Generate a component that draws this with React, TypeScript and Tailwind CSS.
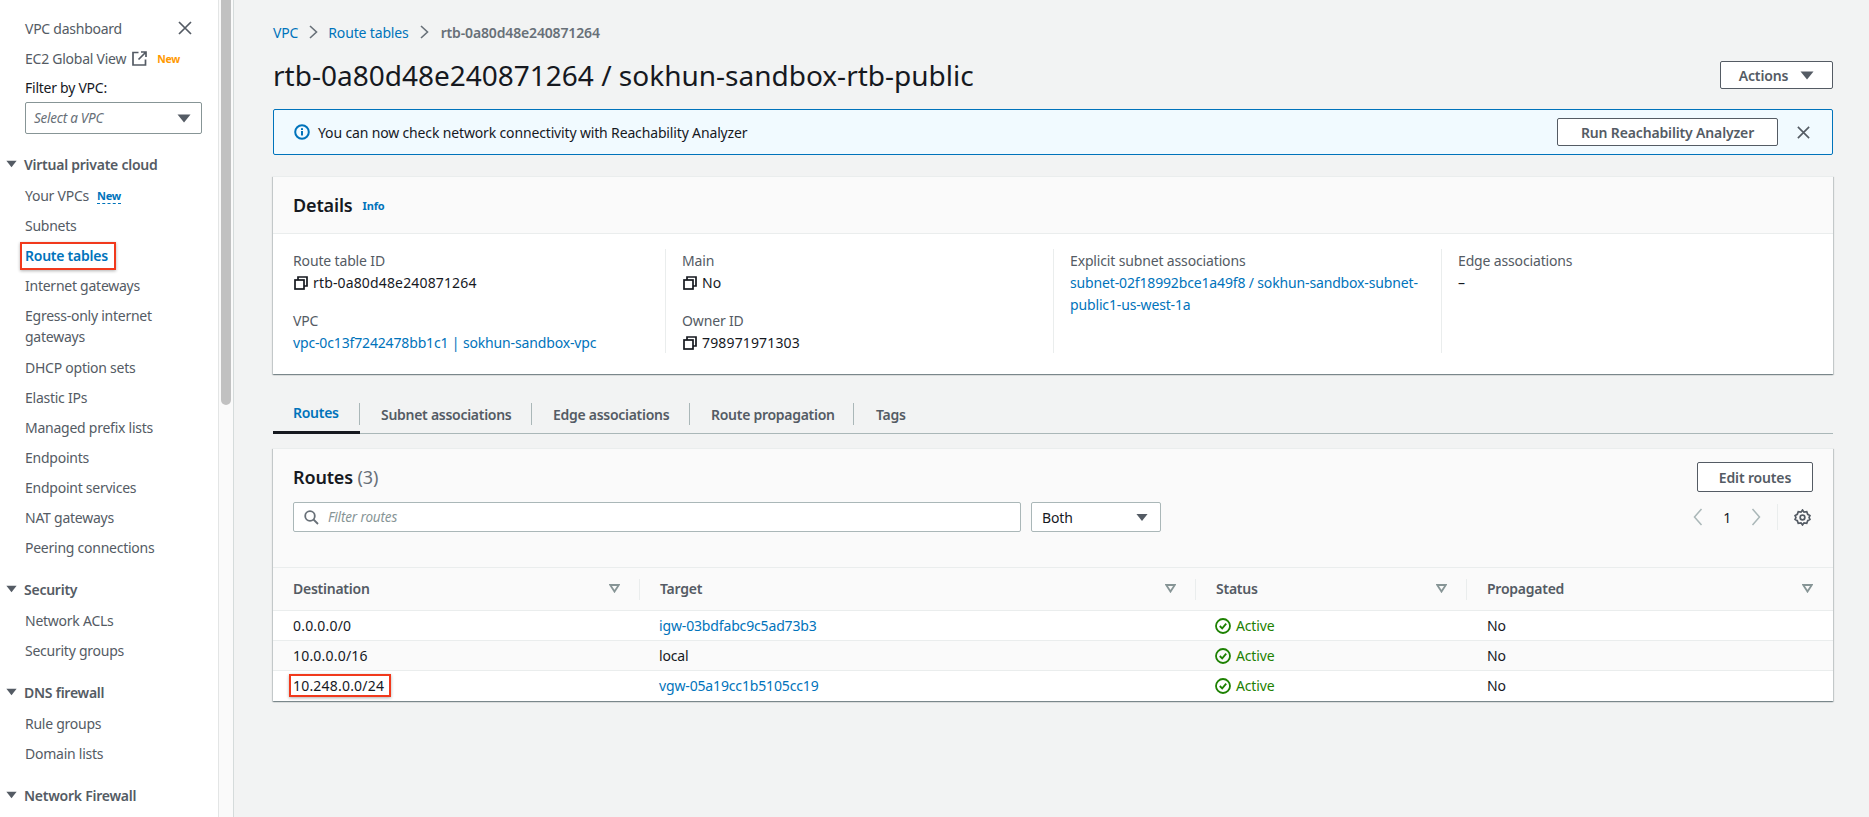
import React from "react";

const Caret = ({ c = "w-[14px] h-[9px]", fill = "#545b64" }: { c?: string; fill?: string }) => (
  <svg viewBox="0 0 14 9" className={c}><path d="M0.5 0.5H13.5L7 8.5Z" fill={fill} /></svg>
);
const Close = ({ s = 16 }: { s?: number }) => (
  <svg width={s} height={s} viewBox="0 0 16 16" fill="none" stroke="#545b64" strokeWidth="1.7"><path d="M2 2L14 14M14 2L2 14" /></svg>
);
const Copy = () => (
  <svg width="14" height="14" viewBox="0 0 14 14" fill="none" stroke="#16191f" strokeWidth="1.7" className="shrink-0 ml-px">
    <rect x="1" y="4" width="9" height="9" />
    <path d="M4 4V1H13V10H10" />
  </svg>
);
const External = () => (
  <svg width="15" height="15" viewBox="0 0 15 15" fill="none" stroke="#545b64" strokeWidth="1.7">
    <path d="M6.5 1.5H1V14H13.5V8.5" />
    <path d="M9 1H14V6M14 1L6.5 8.5" />
  </svg>
);
const Info = () => (
  <svg width="16" height="16" viewBox="0 0 16 16" fill="none" className="shrink-0">
    <circle cx="8" cy="8" r="6.8" stroke="#0073bb" strokeWidth="2" />
    <rect x="7" y="7" width="2" height="4.5" fill="#0073bb" />
    <rect x="7" y="4.2" width="2" height="1.8" fill="#0073bb" />
  </svg>
);
const Check = () => (
  <svg width="16" height="16" viewBox="0 0 16 16" fill="none" stroke="#1d8102" strokeWidth="1.8" className="shrink-0">
    <circle cx="8" cy="8" r="7" />
    <path d="M4.8 8L7.2 10.4L11.2 5.6" />
  </svg>
);
const SortIcon = () => (
  <svg width="11" height="9" viewBox="0 0 11 9" fill="none" stroke="#879596" strokeWidth="1.8" className="shrink-0">
    <path d="M1.2 1H9.8L5.5 7.6Z" />
  </svg>
);
const Gear = () => (
  <svg width="17" height="17" viewBox="0 0 16 16" fill="none" stroke="#545b64" strokeWidth="1.6">
    <path d="M8 1L9.4 3L12 2.6L12.9 5L15 6.2L14.2 8L15 9.8L12.9 11L12 13.4L9.4 13L8 15L6.6 13L4 13.4L3.1 11L1 9.8L1.8 8L1 6.2L3.1 5L4 2.6L6.6 3Z" />
    <circle cx="8" cy="8" r="2.2" />
  </svg>
);
const Chevron = ({ left }: { left?: boolean }) => (
  <svg width="10" height="18" viewBox="0 0 10 18" fill="none" stroke="#aab7b8" strokeWidth="1.5">
    <path d={left ? "M8.5 1L1.5 9L8.5 17" : "M1.5 1L8.5 9L1.5 17"} />
  </svg>
);
const Crumb = () => (
  <svg width="10" height="14" viewBox="0 0 10 14" fill="none" stroke="#687078" strokeWidth="1.6" className="shrink-0">
    <path d="M2 1L8.5 7L2 13" />
  </svg>
);

const Item = ({ children, h = "h-[30px]" }: { children: React.ReactNode; h?: string }) => (
  <div className={`${h} flex items-center pl-[25px] text-[#545b64] whitespace-nowrap`}>{children}</div>
);
const Section = ({ children, mt = "mt-[12px]" }: { children: string; mt?: string }) => (
  <div className={`${mt} mb-px h-[30px] flex items-center pl-[6px] gap-[7px] font-semibold text-[#545b64] whitespace-nowrap`}>
    <Caret c="w-[11px] h-[8px]" />
    {children}
  </div>
);

const Sidebar = () => (
  <aside className="w-[234px] shrink-0 flex h-full overflow-hidden bg-white tracking-[-0.25px]">
    <div className="w-[219px] shrink-0 border-r border-[#e3e5e5] pt-[13px] overflow-hidden">
      <div className="h-[30px] flex items-center justify-between pl-[25px] pr-[25px] text-[#545b64]">
        VPC dashboard
        <Close />
      </div>
      <div className="h-[30px] flex items-center pl-[25px] text-[#545b64] gap-[6px]">
        EC2 Global View
        <External />
        <span className="text-[#ff9900] text-[10.5px] font-bold ml-[4px] mt-[3px]">New</span>
      </div>
      <div className="h-[29px] flex items-center pl-[25px] text-[#16191f]">Filter by VPC:</div>
      <div className="ml-[25px] w-[177px] h-[32px] border border-[#879596] rounded-[2px] flex items-center justify-between pl-[8px] pr-[10px] italic text-[#687078] text-[13.5px]">
        Select a VPC
        <Caret />
      </div>
      <Section mt="mt-[15px]">Virtual private cloud</Section>
      <Item>
        Your VPCs
        <span className="ml-[8px] mt-[2px] text-[#0073bb] text-[11px] font-bold border-b border-dashed border-[#0073bb] leading-[14px]">New</span>
      </Item>
      <Item>Subnets</Item>
      <Item>
        <span className="relative font-semibold text-[#0073bb]">
          Route tables
          <span className="absolute -left-[5px] -right-[8px] -top-[3px] -bottom-[4px] border-2 border-[#f1391c] shadow-[0_1px_3px_rgba(0,0,0,0.3)]" />
        </span>
      </Item>
      <Item>Internet gateways</Item>
      <div className="pl-[25px] pr-[8px] pt-[5px] leading-[21px] text-[#545b64] h-[52px]">Egress-only internet gateways</div>
      <Item>DHCP option sets</Item>
      <Item>Elastic IPs</Item>
      <Item>Managed prefix lists</Item>
      <Item>Endpoints</Item>
      <Item>Endpoint services</Item>
      <Item>NAT gateways</Item>
      <Item>Peering connections</Item>
      <Section>Security</Section>
      <Item>Network ACLs</Item>
      <Item>Security groups</Item>
      <Section>DNS firewall</Section>
      <Item>Rule groups</Item>
      <Item>Domain lists</Item>
      <Section>Network Firewall</Section>
    </div>
    <div className="w-[15px] shrink-0 flex justify-center pt-0 border-r border-[#d5dbdb] bg-[#fafafa]">
      <div className="w-[10px] h-[405px] rounded-b-[5px] bg-[#c1c1c1]" />
    </div>
  </aside>
);

const Btn = ({ children, c }: { children: React.ReactNode; c: string }) => (
  <div className={`${c} bg-white border border-[#545b64] rounded-[2px] flex items-center justify-center font-semibold text-[#545b64] whitespace-nowrap`}>
    {children}
  </div>
);

const Field = ({ label, children, mt }: { label: string; children: React.ReactNode; mt?: string }) => (
  <div className={mt}>
    <div className="h-[22px] flex items-center text-[#545b64]">{label}</div>
    <div className="mt-px leading-[22px] text-[#16191f]">{children}</div>
  </div>
);
const CopyVal = ({ children }: { children: string }) => (
  <div className="flex items-center gap-[5px] tracking-[0.15px]">
    <Copy />
    {children}
  </div>
);

const Details = () => (
  <section className="mt-[21px] bg-white border-t border-[#eaeded] shadow-[0_1px_1px_0_rgba(0,28,36,0.3),1px_1px_1px_0_rgba(0,28,36,0.15),-1px_1px_1px_0_rgba(0,28,36,0.15)] h-[198px]">
    <div className="h-[57px] bg-[#fafafa] border-b border-[#eaeded] flex items-center pl-[20px]">
      <h2 className="text-[18px] font-semibold text-[#16191f]">Details</h2>
      <span className="ml-[10px] mt-[3px] text-[11px] font-bold text-[#0073bb]">Info</span>
    </div>
    <div className="grid grid-cols-[392px_388px_388px_1fr] pt-[15px]">
      <div className="pl-[20px] h-[104px]">
        <Field label="Route table ID"><CopyVal>rtb-0a80d48e240871264</CopyVal></Field>
        <Field label="VPC" mt="mt-[15px]">
          <span className="text-[#0073bb] whitespace-nowrap">vpc-0c13f7242478bb1c1 | sokhun-sandbox-vpc</span>
        </Field>
      </div>
      <div className="pl-[16px] h-[104px] border-l border-[#eaeded]">
        <Field label="Main"><CopyVal>No</CopyVal></Field>
        <Field label="Owner ID" mt="mt-[15px]"><CopyVal>798971971303</CopyVal></Field>
      </div>
      <div className="pl-[16px] pr-[14px] h-[104px] border-l border-[#eaeded]">
        <Field label="Explicit subnet associations">
          <span className="text-[#0073bb]">subnet-02f18992bce1a49f8 / sokhun-sandbox-subnet-public1-us-west-1a</span>
        </Field>
      </div>
      <div className="pl-[16px] h-[104px] border-l border-[#eaeded]">
        <Field label="Edge associations">–</Field>
      </div>
    </div>
  </section>
);

const tabs = [
  ["Routes", "w-[87px] pl-[20px] border-b-[3px] border-[#16191f] text-[#0073bb]"],
  ["Subnet associations", "w-[172px] pl-[21px] text-[#545b64]"],
  ["Edge associations", "w-[158px] pl-[21px] text-[#545b64]"],
  ["Route propagation", "w-[164px] pl-[21px] text-[#545b64]"],
  ["Tags", "w-[80px] pl-[22px] text-[#545b64]"],
];

const Tabs = () => (
  <div className="mt-[22px] h-[38px] flex border-b border-[#aab7b8]">
    {tabs.map(([t, c], i) => (
      <div key={t} className={`${c} h-[38px] pb-[2px] flex items-center font-semibold tracking-[-0.28px] whitespace-nowrap relative`}>
        {t}
        {i < 4 && <span className="absolute right-0 top-[7px] h-[22px] w-px bg-[#aab7b8]" />}
      </div>
    ))}
  </div>
);

const cols = "grid grid-cols-[367px_556px_271px_1fr]";
const Head = ({ label, last }: { label: string; last?: boolean }) => (
  <div className="h-full pb-px flex items-center justify-between pl-[20px] pr-[20px] font-semibold tracking-[-0.25px] text-[#545b64] relative">
    {label}
    <SortIcon />
    {!last && <span className="absolute right-0 top-[11px] h-[21px] w-px bg-[#eaeded]" />}
  </div>
);
const Status = () => (
  <div className="pl-[19px] flex items-center gap-[5px] text-[#1d8102]"><Check />Active</div>
);
const Row = ({ dest, target, link, bg, last }: { dest: React.ReactNode; target: string; link?: boolean; bg: string; last?: boolean }) => (
  <div className={`${cols} ${bg} items-center h-[30px] ${last ? "pb-px" : "border-b border-[#eaeded]"} text-[#16191f]`}>
    <div className="pl-[20px] tracking-[0.2px]">{dest}</div>
    <div className={`pl-[19px] ${link ? "text-[#0073bb]" : ""}`}>{target}</div>
    <Status />
    <div className="pl-[20px]">No</div>
  </div>
);

const Routes = () => (
  <section className="mt-[14px] bg-[#fafafa] border-t border-[#eaeded] shadow-[0_1px_1px_0_rgba(0,28,36,0.3),1px_1px_1px_0_rgba(0,28,36,0.15),-1px_1px_1px_0_rgba(0,28,36,0.15)] h-[253px]">
    <div className="h-[119px] pl-[20px] pr-[20px] pt-[13px] border-b border-[#eaeded] relative">
      <div className="flex items-center justify-between h-[30px]">
        <h2 className="text-[18px] font-semibold text-[#16191f]">
          Routes <span className="font-normal text-[#687078]">(3)</span>
        </h2>
        <Btn c="w-[116px] h-[30px]">Edit routes</Btn>
      </div>
      <div className="mt-[10px] flex items-center">
        <div className="w-[728px] h-[30px] bg-white border border-[#aab7b8] rounded-[2px] flex items-center pl-[10px] gap-[9px]">
          <svg width="15" height="15" viewBox="0 0 15 15" fill="none" stroke="#687078" strokeWidth="1.8">
            <circle cx="6" cy="6" r="4.8" /><path d="M9.5 9.5L14 14" />
          </svg>
          <span className="italic text-[#879596] text-[13.5px]">Filter routes</span>
        </div>
        <div className="ml-[10px] w-[130px] h-[30px] bg-white border border-[#aab7b8] rounded-[2px] flex items-center justify-between pl-[10px] pr-[12px] text-[#16191f]">
          Both
          <Caret c="w-[12px] h-[9px]" />
        </div>
        <div className="ml-auto mr-[2px] flex items-center h-[30px] text-[#16191f]">
          <Chevron left />
          <span className="mx-[20px] font-normal">1</span>
          <Chevron />
          <span className="ml-[16px] w-px h-[26px] bg-[#eaeded]" />
          <span className="ml-[16px] flex"><Gear /></span>
        </div>
      </div>
    </div>
    <div className={`${cols} h-[43px] border-b border-[#eaeded]`}>
      <Head label="Destination" />
      <Head label="Target" />
      <Head label="Status" />
      <Head label="Propagated" last />
    </div>
    <Row bg="bg-white" dest="0.0.0.0/0" target="igw-03bdfabc9c5ad73b3" link />
    <Row bg="bg-[#fafafa]" dest="10.0.0.0/16" target="local" />
    <Row bg="bg-white" last link target="vgw-05a19cc1b5105cc19" dest={
      <span className="relative">
        10.248.0.0/24
        <span className="absolute -left-[4px] -right-[7px] -top-[2px] -bottom-[2px] border-2 border-[#f1391c] shadow-[0_1px_3px_rgba(0,0,0,0.3)]" />
      </span>
    } />
  </section>
);

export default function App() {
  return (
    <div className="w-[1869px] h-[817px] overflow-hidden flex bg-[#f2f3f3] text-[14px] font-['Noto_Sans','Open_Sans',sans-serif]">
      <Sidebar />
      <main className="flex-1 pl-[39px] pr-[36px] pt-[22px] tracking-[-0.15px]">
        <nav className="h-[20px] flex items-center gap-[10px] whitespace-nowrap">
          <span className="text-[#0073bb]">VPC</span>
          <Crumb />
          <span className="text-[#0073bb]">Route tables</span>
          <Crumb />
          <span className="font-semibold text-[#687078] ml-[2px]">rtb-0a80d48e240871264</span>
        </nav>
        <div className="mt-[10px] h-[46px] flex items-center justify-between tracking-normal">
          <h1 className="text-[28px] text-[#16191f] whitespace-nowrap leading-[40px]">rtb-0a80d48e240871264 / sokhun-sandbox-rtb-public</h1>
          <Btn c="w-[113px] h-[28px] gap-[12px] tracking-[-0.15px]">Actions<Caret /></Btn>
        </div>
        <div className="mt-[11px] h-[46px] bg-[#f1faff] border border-[#0073bb] rounded-[2px] flex items-center pl-[20px] pr-[21px] text-[#16191f]">
          <Info />
          <span className="ml-[8px]">You can now check network connectivity with Reachability Analyzer</span>
          <Btn c="ml-auto w-[221px] h-[28px]">Run Reachability Analyzer</Btn>
          <span className="ml-[18px] flex"><Close s={15} /></span>
        </div>
        <Details />
        <Tabs />
        <Routes />
      </main>
    </div>
  );
}
